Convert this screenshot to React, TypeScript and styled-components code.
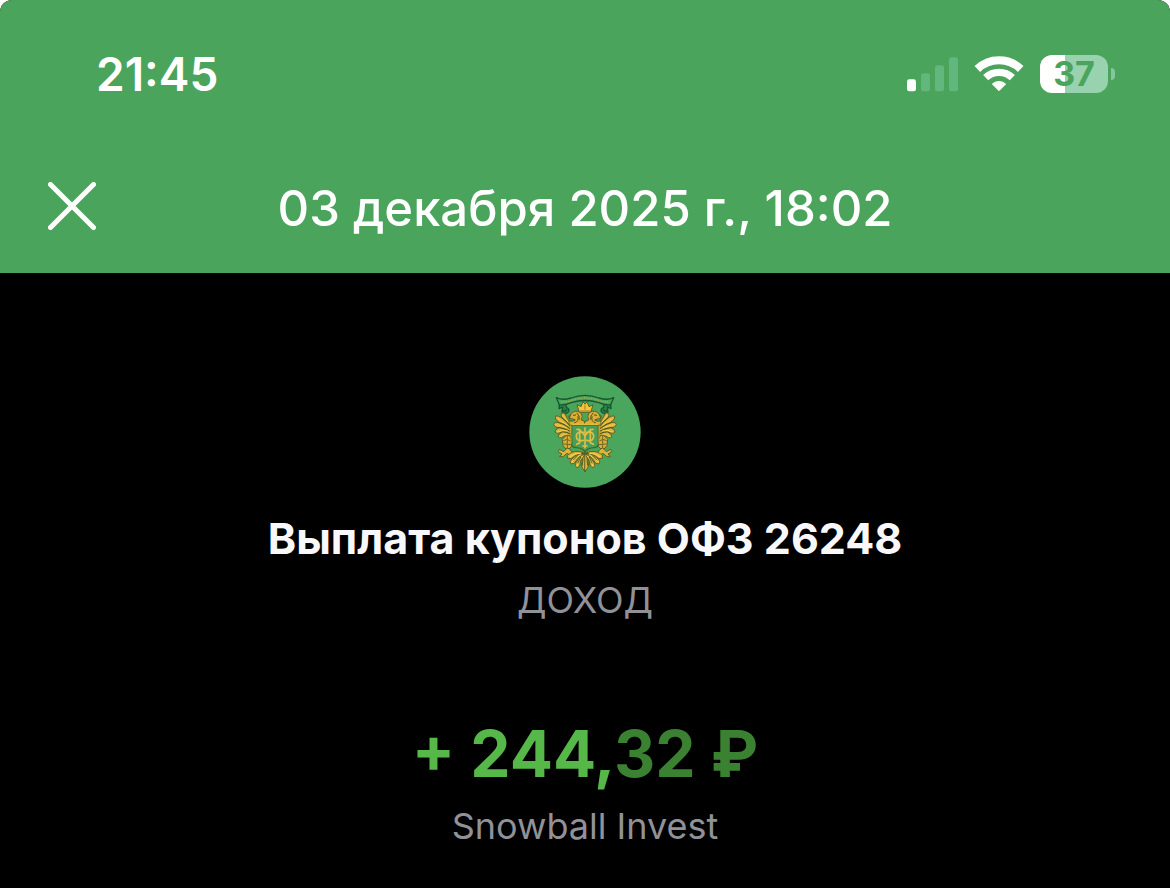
import React from 'react'
import styled, { createGlobalStyle } from 'styled-components'

interface AmountProps {
    whole: string;
    fraction: string;
}

const SignalIcon: React.FC = () => (
    <svg width="51" height="35" viewBox="51 50 153 105" aria-hidden="true">
        <rect x="51" y="117" width="27" height="36" rx="7" fill="#fff" />
        <g fill="#62b77c">
            <rect x="93" y="99" width="27" height="54" rx="7" />
            <rect x="135" y="75" width="27" height="78" rx="7" />
            <rect x="177" y="51" width="27" height="102" rx="7" />
        </g>
    </svg>
)

const WifiIcon: React.FC = () => (
    <svg width="50" height="37" viewBox="252 47 150 111" fill="none" stroke="#fff" aria-hidden="true">
        <path d="M262 86 A94 94 0 0 1 392 86" strokeWidth="24" />
        <path d="M287 112 A58 58 0 0 1 367 112" strokeWidth="22" />
        <path d="M327 151 L307 131 A30 30 0 0 1 347 131 Z" fill="#fff" strokeWidth="3" strokeLinejoin="round" />
    </svg>
)

const CloseIcon: React.FC = () => (
    <svg width="48" height="48" viewBox="0 0 48 48" fill="none" stroke="#fff" strokeWidth="5" strokeLinecap="round" aria-hidden="true">
        <path d="M2.5 2.5 L45.5 45.5 M45.5 2.5 L2.5 45.5" />
    </svg>
)

// left half of the eagle, mirrored for the right one
const EagleHalf: React.FC = () => (
    <g stroke="#57531c" strokeWidth="2.5" strokeLinejoin="round" strokeLinecap="round">
        {/* ribbon end */}
        <path d="M119 106 L117 127 L128 122 L126 137 Q137 147 146 136 Q149 127 140 124 L137 114 Z" fill="#2f8048" stroke="#15582f" strokeWidth="4" />
        <path d="M128 133 Q136 138 139 130" fill="none" stroke="#15582f" strokeWidth="4" />
        {/* wing feathers */}
        <path d="M154 174 Q141 157 133 140 Q122 138 123 146 Q124 152 130 158 Q114 146 106 150 Q103 158 117 168 Q102 167 101 175 Q104 185 118 184 Q104 189 105 197 Q112 204 126 197 Q111 207 117 214 Q124 217 134 207 L152 210 Z" fill="#dcb338" />
        <path d="M130 158 Q139 164 150 179 M117 169 Q134 173 149 186 M118 184 Q134 186 149 194 M126 197 Q139 196 150 202" fill="none" stroke="#4d5a20" strokeWidth="3.5" />
        <path d="M129 147 Q138 162 147 170 M111 154 Q127 167 141 176 M107 175 Q124 176 140 184 M111 197 Q126 190 142 193 M120 211 Q130 203 144 204" fill="none" stroke="#f3cd50" strokeWidth="3" />
        {/* neck and head */}
        <path d="M195 175 L153 178 Q143 171 148 163 Q158 168 166 161 Q158 156 148 157 Q149 143 160 137 Q175 130 184 142 Q190 151 183 160 L195 166 Z" fill="#dcb036" />
        <path d="M148 157 Q142 152 151 145 M160 147 L167 146 M163 170 Q178 166 174 151 M171 140 Q181 149 178 159" fill="none" strokeWidth="3" />
        {/* leg */}
        <path d="M139 207 L127 219 L129 238 L135 246 L146 249 L155 240 L157 226 L149 208 Z" fill="#d4ad3b" />
        <path d="M131 222 Q141 215 153 224 M131 233 L153 235 M142 210 L142 246" fill="none" stroke="#776922" strokeWidth="3" />
        {/* claw */}
        <path d="M141 246 L131 256 L118 249 L115 256 L126 263 L119 271 L129 271 L141 261 L151 267 L158 259 L148 248 Z" fill="#dfb538" />
        {/* tail feathers */}
        <g fill="#e0b63a">
            <path d="M188 258 Q165 251 149 262 Q139 266 143 276 Q153 281 164 269 Q173 262 188 264 Z" />
            <path d="M188 260 Q166 266 155 278 Q147 286 153 293 Q164 295 170 281 Z" />
            <path d="M191 260 Q175 275 168 289 Q162 299 170 304 Q181 303 181 287 Z" />
            <path d="M195 259 Q184 281 184 297 Q186 307 195 315 Z" />
        </g>
        <path d="M150 271 Q164 259 181 261 M156 287 Q165 273 183 265 M171 298 Q176 283 189 268" fill="none" stroke="#f5d463" strokeWidth="3" />
        <path d="M173 268 L160 281 M182 273 L174 290 M189 278 L187 297" fill="none" stroke="#4f6424" strokeWidth="3" />
    </g>
)

const Emblem: React.FC = () => (
    <svg width="112" height="112" viewBox="27 29 336 336" role="img" aria-label="Эмблема эмитента">
        <circle cx="195" cy="197" r="167" fill="#4aa55d" />
        <EagleHalf />
        <g transform="translate(390 0) scale(-1 1)">
            <EagleHalf />
        </g>
        {/* ribbon */}
        <path d="M109 94 Q126 103 153 95 Q195 79 237 95 Q264 103 281 94 L272 115 Q255 117 236 109 Q195 96 154 109 Q135 117 118 115 Z" fill="#4aa55d" stroke="#15582f" strokeWidth="4" strokeLinejoin="round" />
        <path d="M123 106 Q139 108 154 102 Q195 88 236 102 Q251 108 267 106" fill="none" stroke="#9dae4c" strokeWidth="4" strokeDasharray="4 3" />
        {/* crown */}
        <path d="M178 138 L171 115 L183 121 L189 107 L195 113 L201 107 L207 121 L219 115 L212 138 Z" fill="#f1c63c" stroke="#57531c" strokeWidth="2.5" strokeLinejoin="round" />
        <path d="M179 134 H211 M195 114 V130" fill="none" stroke="#a87d20" strokeWidth="3" />
        {/* shield */}
        <path d="M155 177 H235 V235 Q234 243 221 244 Q204 245 195 256 Q186 245 169 244 Q156 243 155 235 Z" fill="#479f5a" stroke="#3f6a28" strokeWidth="4" />
        <path d="M155 174 H235" fill="none" stroke="#e7ba3a" strokeWidth="5" />
        <path d="M153 178 V232 M237 178 V232" fill="none" stroke="#c9a435" strokeWidth="3" />
        {/* interlaced ornament of the shield */}
        <g fill="none" stroke="#e3bd42" strokeWidth="5" strokeLinecap="round" strokeLinejoin="round">
            <path d="M195 185 V244 M189 239 H201" />
            <path d="M190 198 Q169 194 169 210 Q169 226 190 222 M200 198 Q221 194 221 210 Q221 226 200 222" />
            <path d="M171 189 L179 190 L179 229 L170 234 M219 189 L211 190 L211 229 L220 234" />
            <path d="M180 191 L195 209 L210 191" strokeWidth="4" />
        </g>
    </svg>
)

const Battery: React.FC = () => (
    <BatteryWrap role="img" aria-label="37%">
        <BatteryBody>37</BatteryBody>
        <BatteryTip />
    </BatteryWrap>
)

const Amount: React.FC<AmountProps> = ({ whole, fraction }) => (
    <AmountText>
        + {whole},<Fraction>{fraction} ₽</Fraction>
    </AmountText>
)

const App: React.FC = () => {
    return (
        <>
            <GlobalStyle />
            <Screen>
                <Header>
                    <StatusBar>
                        <Time>21:45</Time>
                        <StatusIcons>
                            <SignalIcon />
                            <WifiIcon />
                            <Battery />
                        </StatusIcons>
                    </StatusBar>
                    <NavBar>
                        <CloseButton type="button" aria-label="Закрыть">
                            <CloseIcon />
                        </CloseButton>
                        <Title>03 декабря 2025 г., 18:02</Title>
                    </NavBar>
                </Header>
                <Details>
                    <Emblem />
                    <Name>Выплата купонов ОФЗ 26248</Name>
                    <Kind>ДОХОД</Kind>
                    <Amount whole="244" fraction="32" />
                    <Account>Snowball Invest</Account>
                </Details>
            </Screen>
        </>
    )
}

const GlobalStyle = createGlobalStyle`
  * {
    box-sizing: border-box;
  }

  body {
    margin: 0;
    background: #fff;
    font-family: Inter, "Liberation Sans", sans-serif;
  }

  svg {
    display: block;
    flex-shrink: 0;
  }
`;

const Screen = styled.div`
  min-height: 100vh;
  background: #000;
  border-radius: 12px 12px 0 0;
  overflow: hidden;
`;

const Header = styled.header`
  padding: 44px 48px 30px;
  background: #4aa45c;
  color: #fff;
`;

const StatusBar = styled.div`
  display: flex;
  align-items: center;
  justify-content: space-between;
  padding: 0 7px 0 48px;
`;

const Time = styled.time`
  font-size: 46px;
  line-height: 60px;
  font-weight: 600;
`;

const StatusIcons = styled.div`
  display: flex;
  align-items: center;
  gap: 16px;
`;

const BatteryWrap = styled.div`
  display: flex;
  align-items: center;
  gap: 3px;
`;

const BatteryBody = styled.div`
  width: 68px;
  border-radius: 12px;
  background: linear-gradient(to right, #fff 37%, #98d2ae 37%);
  color: #4aa45c;
  font-size: 34px;
  line-height: 38px;
  font-weight: 700;
  text-align: center;
`;

const BatteryTip = styled.span`
  width: 4px;
  height: 12px;
  border-radius: 0 6px 6px 0;
  background: #86c69c;
`;

const NavBar = styled.div`
  display: grid;
  grid-template-columns: 1fr auto 1fr;
  align-items: start;
  margin-top: 71px;
`;

const CloseButton = styled.button`
  justify-self: start;
  padding: 7px 0 0;
  border: 0;
  background: none;
  cursor: pointer;
`;

const Title = styled.h1`
  margin: 0;
  font-size: 49px;
  line-height: 68px;
  font-weight: 500;
`;

const Details = styled.main`
  display: flex;
  flex-direction: column;
  align-items: center;
  padding: 103px 24px 24px;
  text-align: center;
`;

const Name = styled.h2`
  margin: 20px 0 0;
  color: #f8f8fa;
  font-size: 43px;
  line-height: 60px;
  font-weight: 700;
`;

const Kind = styled.p`
  margin: 8px 0 0;
  color: #919198;
  font-size: 36px;
  line-height: 48px;
`;

const AmountText = styled.p`
  margin: 90px 0 0;
  color: #55b848;
  font-size: 64px;
  line-height: 80px;
  font-weight: 700;
`;

const Fraction = styled.span`
  color: #3b8132;
`;

const Account = styled.p`
  margin: 8px 0 0;
  color: #919198;
  font-size: 36px;
  line-height: 48px;
`;

export default App
